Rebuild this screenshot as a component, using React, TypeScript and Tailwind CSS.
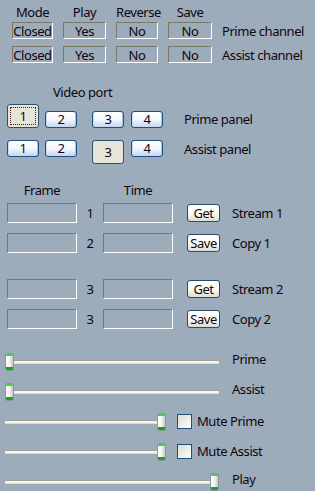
import React from 'react';

const channels = [
    { mode: 'Closed', play: 'Yes', reverse: 'No', save: 'No', label: 'Prime channel' },
    { mode: 'Closed', play: 'Yes', reverse: 'No', save: 'No', label: 'Assist channel' },
];

const streams = [
    { n: '1', btn: 'Get', label: 'Stream 1', gap: 'mt-0' },
    { n: '2', btn: 'Save', label: 'Copy 1', gap: 'mt-[10px]' },
    { n: '3', btn: 'Get', label: 'Stream 2', gap: 'mt-[26px]' },
    { n: '3', btn: 'Save', label: 'Copy 2', gap: 'mt-[10px]' },
];

const Field = ({ children, className = '' }: { children?: React.ReactNode; className?: string }) => (
    <div className={`flex items-center justify-center border-t border-l border-[#7d7766] border-b border-r border-b-white border-r-white ${className}`}>
        {children}
    </div>
);

const PortButton = ({ label, pressed, focus }: { label: string; pressed?: boolean; focus?: boolean }) =>
    pressed ? (
        <div className="w-[32px] h-[24px] rounded-[3px] border border-[#2f4f6f] bg-[#e7e4d8] flex items-center justify-center p-[2px]">
            <div className={`w-full h-full flex items-center justify-center ${focus ? 'border border-dotted border-[#4a1a2a]' : ''}`}>
                {label}
            </div>
        </div>
    ) : (
        <div className="w-[32px] h-[17px] rounded-[3px] border border-[#1d4f8a] bg-gradient-to-b from-white via-[#f4f7fc] to-[#c3d5f0] shadow-[inset_1px_0_0_#c9dbf4,inset_-1px_0_0_#a9c3ea] flex items-center justify-center leading-none">
            {label}
        </div>
    );

const Slider = ({ width, thumbRight }: { width: string; thumbRight?: boolean }) => (
    <div className={`relative h-[18px] ${width}`}>
        <div className="absolute left-0 right-0 top-[7px] h-[4px] border-t border-[#a19f96] bg-[#f6f4ee] border-b border-b-[#dedbd1]" />
        <div className={`absolute top-0 ${thumbRight ? 'right-0' : 'left-0'} w-[9px] h-[18px] border border-[#8796a2] rounded-[2px] bg-gradient-to-r from-white via-[#f4f4ef] to-[#c9c8c0] flex flex-col justify-between overflow-hidden`}>
            <div className="h-[2px] bg-[#52c952]" />
            <div className="h-[3px] bg-[#1f9f1f]" />
        </div>
    </div>
);

const CheckBox = () => (
    <div className="w-[15px] h-[15px] border border-[#1c5180] bg-gradient-to-br from-[#dcdcd5] to-white" />
);

export default function App() {
    return (
        <div className="w-[315px] h-[491px] overflow-hidden bg-[#9dacba] text-[13px] tracking-[-0.45px] text-[#10050f] font-['Noto_Sans',sans-serif] leading-[16px]">
            {/* channel table */}
            <div className="pt-[4px] pl-[12px]">
                <div className="grid grid-cols-[41px_43px_42px_44px] gap-x-[10px] text-center">
                    <span>Mode</span>
                    <span>Play</span>
                    <span>Reverse</span>
                    <span>Save</span>
                </div>
                <div className="mt-[2px] grid grid-cols-[41px_43px_42px_44px_auto] gap-x-[10px] gap-y-[7px]">
                    {channels.map((c) => (
                        <React.Fragment key={c.label}>
                            <Field className="h-[17px]">{c.mode}</Field>
                            <Field className="h-[17px]">{c.play}</Field>
                            <Field className="h-[17px]">{c.reverse}</Field>
                            <Field className="h-[17px]">{c.save}</Field>
                            <span className="self-center">{c.label}</span>
                        </React.Fragment>
                    ))}
                </div>
            </div>

            {/* video port */}
            <div className="mt-[21px] pl-[53px]">Video port</div>
            <div className="mt-[4px] pl-[7px] flex items-end">
                <div className="flex items-end h-[24px]">
                    <PortButton label="1" pressed focus />
                    <div className="ml-[6px]"><PortButton label="2" /></div>
                    <div className="ml-[15px]"><PortButton label="3" /></div>
                    <div className="ml-[7px]"><PortButton label="4" /></div>
                </div>
                <span className="ml-[21px] mb-[1px]">Prime panel</span>
            </div>
            <div className="mt-[12px] pl-[7px] flex items-start">
                <div className="flex items-start">
                    <PortButton label="1" />
                    <div className="ml-[6px]"><PortButton label="2" /></div>
                    <div className="ml-[15px]"><PortButton label="3" pressed /></div>
                    <div className="ml-[7px]"><PortButton label="4" /></div>
                </div>
                <span className="ml-[21px] mt-[1px]">Assist panel</span>
            </div>

            {/* frame / time */}
            <div className="mt-[18px] pl-[7px] flex">
                <span className="w-[70px] text-center">Frame</span>
                <span className="ml-[26px] w-[70px] text-center">Time</span>
            </div>
            <div className="mt-[5px] pl-[7px]">
                {streams.map((s, i) => (
                    <div key={i} className={`flex items-center h-[20px] ${s.gap}`}>
                        <Field className="w-[70px] h-[20px]" />
                        <span className="w-[26px] text-center">{s.n}</span>
                        <Field className="w-[70px] h-[20px]" />
                        <div className="ml-[14px] w-[33px] h-[18px] rounded-[3px] border border-[#2c4b6b] bg-gradient-to-b from-white via-[#fbfbf8] to-[#dedcd3] flex items-center justify-center">
                            {s.btn}
                        </div>
                        <span className="ml-[12px]">{s.label}</span>
                    </div>
                ))}
            </div>

            {/* sliders */}
            <div className="mt-[24px] pl-[5px] flex flex-col gap-[12px]">
                <div className="flex items-center h-[18px]">
                    <Slider width="w-[214px]" />
                    <span className="ml-[13px] mb-[6px]">Prime</span>
                </div>
                <div className="flex items-center h-[18px]">
                    <Slider width="w-[214px]" />
                    <span className="ml-[13px] mb-[6px]">Assist</span>
                </div>
                <div className="flex items-center h-[18px]">
                    <Slider width="w-[161px]" thumbRight />
                    <div className="ml-[11px] mb-[2px]"><CheckBox /></div>
                    <span className="ml-[5px] mb-[2px]">Mute Prime</span>
                </div>
                <div className="flex items-center h-[18px]">
                    <Slider width="w-[161px]" thumbRight />
                    <div className="ml-[11px] mb-[2px]"><CheckBox /></div>
                    <span className="ml-[5px] mb-[2px]">Mute Assist</span>
                </div>
                <div className="flex items-center h-[18px]">
                    <Slider width="w-[214px]" thumbRight />
                    <span className="ml-[13px] mb-[6px]">Play</span>
                </div>
            </div>
        </div>
    );
}
